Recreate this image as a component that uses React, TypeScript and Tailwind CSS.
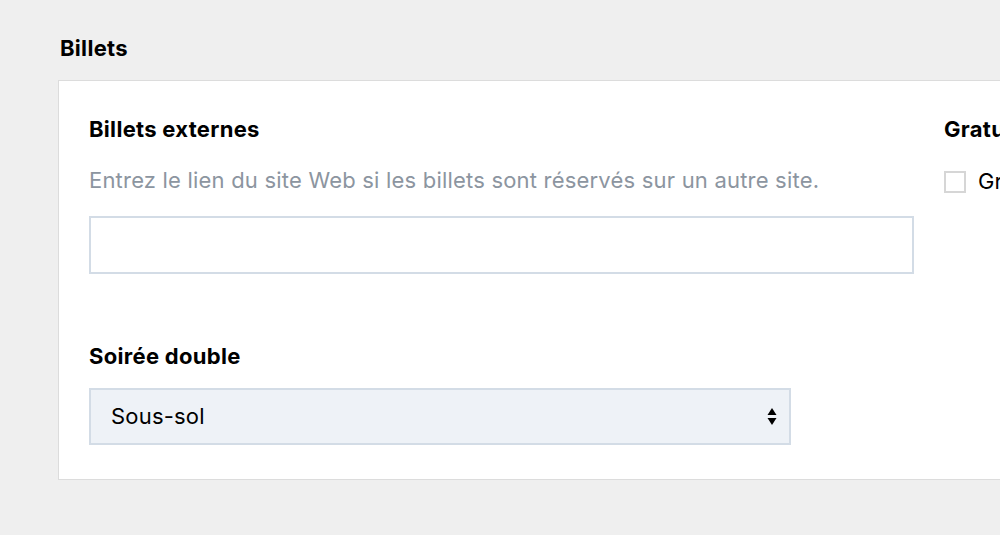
import { useState } from 'react';

const App = () => {
  const [lien, setLien] = useState('');
  const [soiree, setSoiree] = useState('sous-sol');

  return (
    <div className="min-h-[535px] w-[1000px] overflow-hidden bg-[#efefef] pl-[58px] pt-[36px] font-['Inter','Liberation_Sans',Arial,sans-serif] text-black">
      <h2 className="mb-[20px] ml-[2px] text-[22px] font-bold leading-[24px] tracking-[0.3px]">Billets</h2>
      <div className="w-[1000px] border border-[#dcdcdc] bg-white pb-[34px] pl-[30px] pt-[36px]">
        <div className="flex gap-[30px]">
          <div className="w-[825px] shrink-0">
            <div className="text-[22px] font-bold leading-[24px] tracking-[0.3px]">Billets externes</div>
            <p className="mt-[27px] whitespace-nowrap text-[22px] leading-[24px] tracking-[0.2px] text-[#8c95a0]">
              Entrez le lien du site Web si les billets sont réservés sur un autre site.
            </p>
            <input
              value={lien}
              onChange={(e) => setLien(e.target.value)}
              className="mt-[24px] block h-[58px] w-full border-2 border-[#d3dce6] bg-white px-3 text-[22px] outline-none"
            />
            <div className="mt-[70px] text-[22px] font-bold leading-[24px] tracking-[0.3px]">Soirée double</div>
            <div className="relative mt-[20px] w-[702px]">
              <select
                value={soiree}
                onChange={(e) => setSoiree(e.target.value)}
                className="block h-[57px] w-full appearance-none border-2 border-[#d3dce6] bg-[#eef2f7] pl-[20px] text-[22px] tracking-[0.2px] text-black outline-none"
              >
                <option value="sous-sol">Sous-sol</option>
                <option value="salle">Salle principale</option>
              </select>
              <svg className="pointer-events-none absolute right-[14px] top-[20px]" width="10" height="17" viewBox="0 0 10 17">
                <path d="M5 0 L9.5 7 H0.5 Z" fill="#000" />
                <path d="M0.5 10 H9.5 L5 17 Z" fill="#000" />
              </svg>
            </div>
          </div>
          <div className="shrink-0">
            <div className="text-[22px] font-bold leading-[24px] tracking-[0.3px]">Gratuit</div>
            <label className="mt-[24px] flex items-center gap-[12px] text-[22px]">
              <span className="block h-[22px] w-[22px] border-2 border-[#d6d6d6] bg-white" />
              Gratuit
            </label>
          </div>
        </div>
      </div>
    </div>
  );
};

export default App;
